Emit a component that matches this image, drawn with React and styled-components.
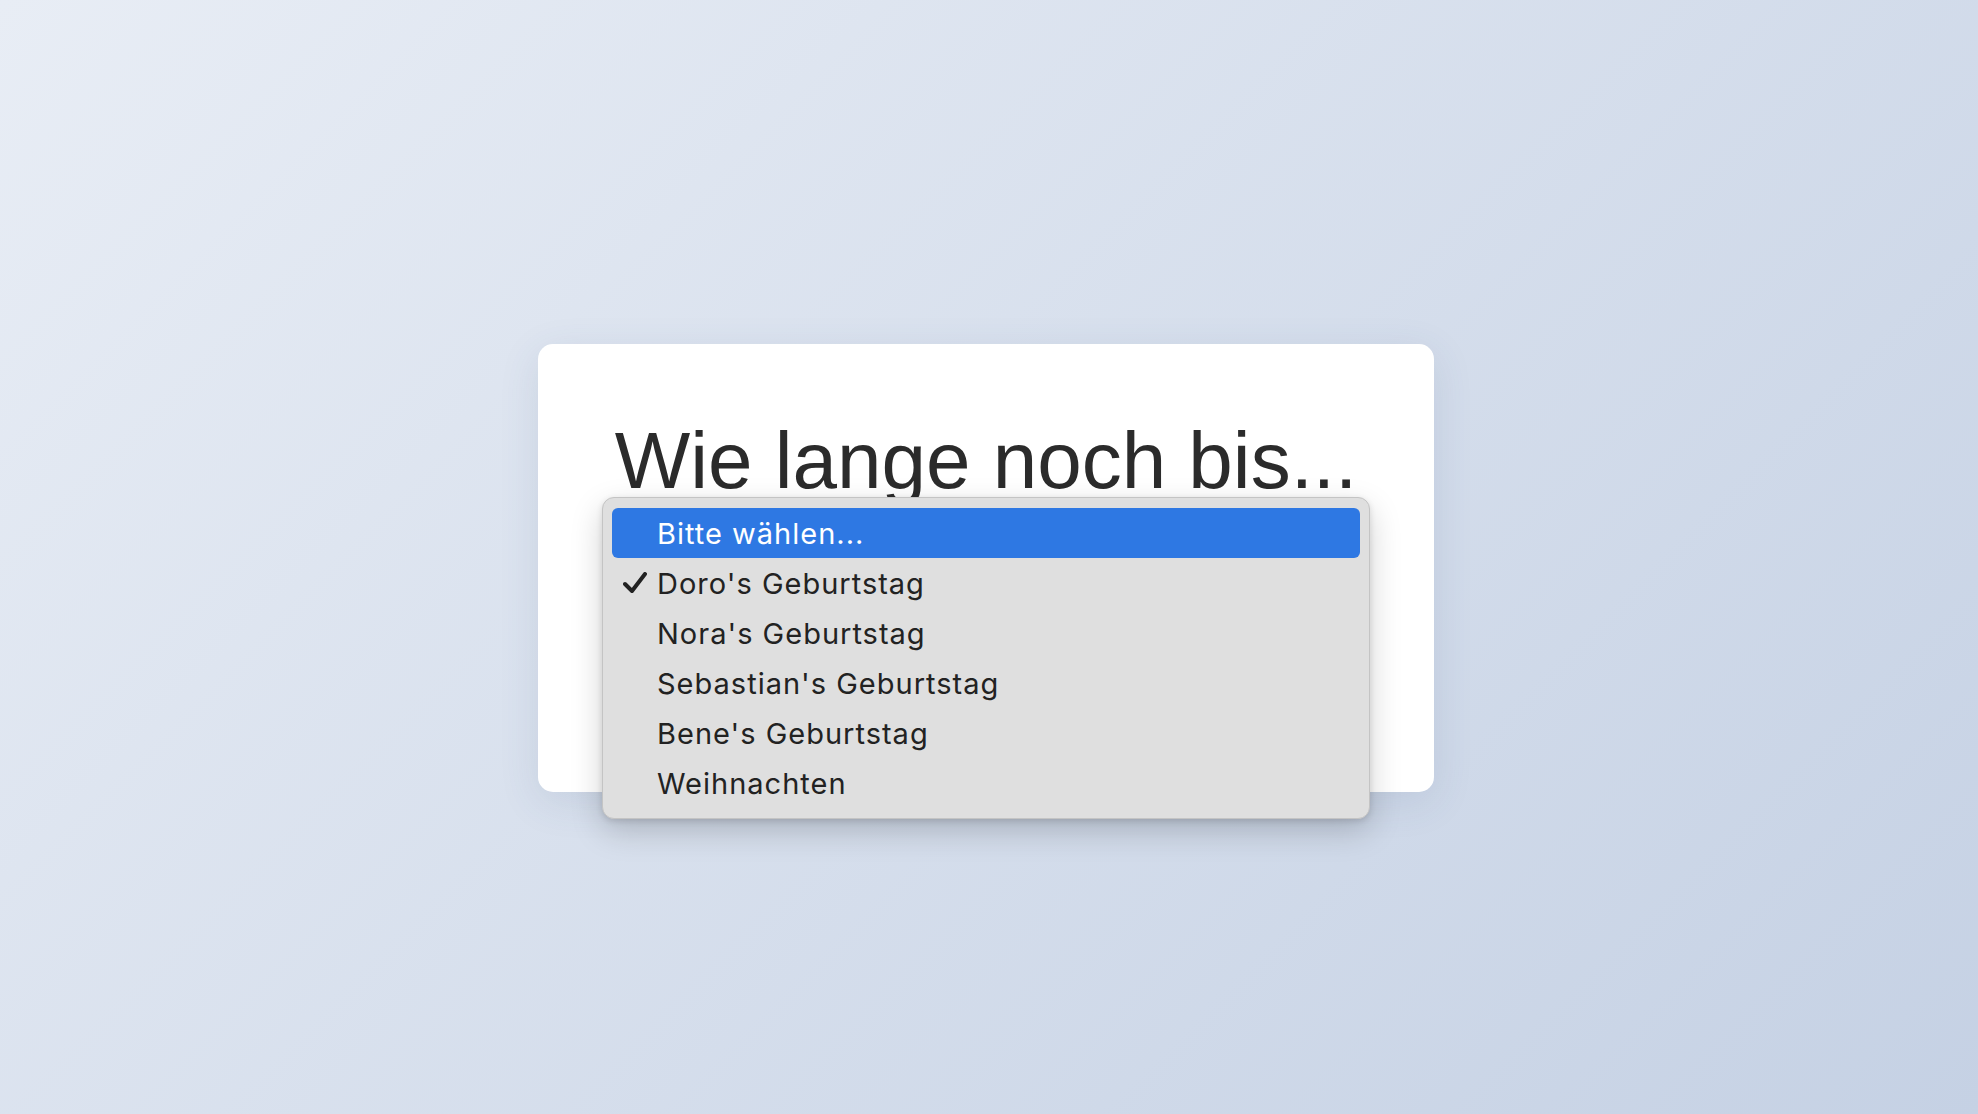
import React from "react";
import styled, { createGlobalStyle } from "styled-components";

const GlobalStyle = createGlobalStyle`
  html, body { margin: 0; padding: 0; }
  body {
    min-height: 100vh;
    background: linear-gradient(135deg, #e8edf5 0%, #c5d1e4 100%);
    font-family: "Liberation Sans", Arial, sans-serif;
  }
`;

const Page = styled.div`
  box-sizing: border-box;
  height: 1114px;
  padding-top: 22px;
  padding-right: 6px;
  display: flex;
  align-items: center;
  justify-content: center;
`;

const Card = styled.div`
  position: relative;
  box-sizing: border-box;
  width: 896px;
  height: 448px;
  padding-top: 69px;
  background: #ffffff;
  border-radius: 15px;
  box-shadow: 0 10px 40px rgba(60, 80, 120, 0.12);
  display: flex;
  flex-direction: column;
  align-items: center;
`;

const Title = styled.h1`
  margin: 0;
  font-family: "Liberation Sans", Arial, sans-serif;
  font-weight: 400;
  font-size: 80px;
  line-height: 96px;
  color: #2b2b2b;
  white-space: nowrap;
`;

const SelectArea = styled.div`
  width: 768px;
  height: 60px;
  margin-top: 20px;
`;

const Popup = styled.ul`
  position: absolute;
  left: 64px;
  top: 153px;
  box-sizing: border-box;
  width: 768px;
  margin: 0;
  padding: 10px 9px;
  list-style: none;
  background: #dfdfdf;
  border: 1px solid #c4c4c4;
  border-radius: 12px;
  box-shadow: 0 12px 32px rgba(0, 0, 0, 0.18), 0 2px 6px rgba(0, 0, 0, 0.12);
`;

const Option = styled.li`
  position: relative;
  height: 50px;
  display: flex;
  align-items: center;
  padding-left: 45px;
  border-radius: 6px;
  font-family: Inter, "Noto Sans", sans-serif;
  font-size: 29px;
  letter-spacing: 1px;
  color: ${(p) => (p.$active ? "#ffffff" : "#222222")};
  background: ${(p) => (p.$active ? "#2e78e3" : "transparent")};
`;

const Check = styled.svg`
  position: absolute;
  left: 11px;
  top: 14px;
  width: 24px;
  height: 22px;
`;

const options = [
  "Bitte wählen...",
  "Doro's Geburtstag",
  "Nora's Geburtstag",
  "Sebastian's Geburtstag",
  "Bene's Geburtstag",
  "Weihnachten",
];

export default function App() {
  return (
    <>
      <GlobalStyle />
      <Page>
        <Card>
          <Title>Wie lange noch bis...</Title>
          <SelectArea />
          <Popup>
            {options.map((o, i) => (
              <Option key={o} $active={i === 0}>
                {i === 1 && (
                  <Check viewBox="0 0 24 22">
                    <polyline
                      points="2,12 9,19 22,2"
                      fill="none"
                      stroke="#222"
                      strokeWidth="4"
                      strokeLinecap="round"
                      strokeLinejoin="round"
                    />
                  </Check>
                )}
                {o}
              </Option>
            ))}
          </Popup>
        </Card>
      </Page>
    </>
  );
}
